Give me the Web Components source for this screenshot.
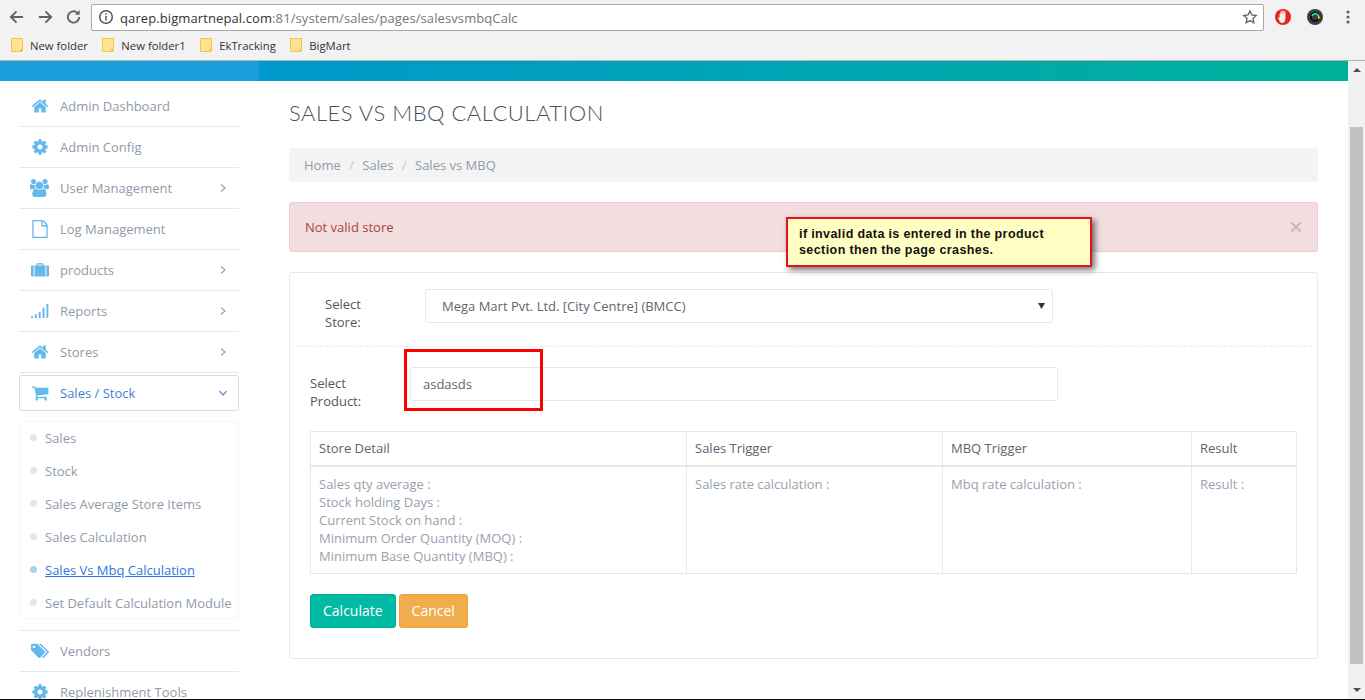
<!DOCTYPE html>
<html lang="en"><head><meta charset="utf-8"><title>Sales vs MBQ Calculation</title>
<style>
html,body{margin:0;padding:0;background:#fff;overflow:hidden;height:700px}
body{font:13px "Open Sans",sans-serif;color:#8f9ba9}
</style></head><body>
<app-shell>
  <browser-bar slot="top" url-host="qarep.bigmartnepal.com" url-rest=":81/system/sales/pages/salesvsmbqCalc">
    <book-mark>New folder</book-mark><book-mark>New folder1</book-mark><book-mark>EkTracking</book-mark><book-mark>BigMart</book-mark>
  </browser-bar>
  <side-nav slot="side">
    <nav-item icon="home">Admin Dashboard</nav-item>
    <nav-item icon="cog">Admin Config</nav-item>
    <nav-item icon="users" caret="right">User Management</nav-item>
    <nav-item icon="file">Log Management</nav-item>
    <nav-item icon="suitcase" caret="right">products</nav-item>
    <nav-item icon="signal" caret="right">Reports</nav-item>
    <nav-item icon="home" caret="right">Stores</nav-item>
    <nav-item icon="cart" caret="down" active>Sales / Stock</nav-item>
    <sub-nav>
      <sub-item>Sales</sub-item>
      <sub-item>Stock</sub-item>
      <sub-item>Sales Average Store Items</sub-item>
      <sub-item>Sales Calculation</sub-item>
      <sub-item current>Sales Vs Mbq Calculation</sub-item>
      <sub-item>Set Default Calculation Module</sub-item>
    </sub-nav>
    <nav-item icon="tags">Vendors</nav-item>
    <nav-item icon="cog">Replenishment Tools</nav-item>
  </side-nav>
  <calc-page slot="main"></calc-page>
</app-shell>
<script>
const FA={
 home:['0 0 1792 1792','M1472 992v480q0 26-19 45t-45 19h-384v-384h-256v384h-384q-26 0-45-19t-19-45v-480q0-1 .5-3t.5-3l575-474 575 474q1 2 1 6zm223-69l-62 74q-8 9-21 11h-3q-13 0-21-7l-692-577-692 577q-12 8-24 7-13-2-21-11l-62-74q-8-10-7-23.5t11-21.5l719-599q32-26 76-26t76 26l244 204v-195q0-14 9-23t23-9h192q14 0 23 9t9 23v408l219 182q10 8 11 21.5t-7 23.5z'],
 cog:['0 0 1792 1792','M1152 896q0-106-75-181t-181-75-181 75-75 181 75 181 181 75 181-75 75-181zm512-109v222q0 12-8 23t-20 13l-185 28q-19 54-39 91 35 50 107 138 10 12 10 25t-9 23q-27 37-99 108t-94 71q-12 0-26-9l-138-108q-44 23-91 38-16 136-29 186-7 28-36 28h-222q-14 0-24.5-8.5t-11.5-21.5l-28-184q-49-16-90-37l-141 107q-10 9-25 9-14 0-25-11-126-114-165-168-7-10-7-23 0-12 8-23 15-21 51-66.5t54-70.5q-27-50-41-99l-183-27q-13-2-21-12.5t-8-23.5v-222q0-12 8-23t19-13l186-28q14-46 39-92-40-57-107-138-10-12-10-24 0-10 9-23 26-36 98.500-107.500t94.500-71.500q13 0 26 10l138 107q44-23 91-38 16-136 29-186 7-28 36-28h222q14 0 24.500 8.500t11.500 21.500l28 184q49 16 90 37l142-107q9-9 24-9 13 0 25 10 129 119 165 170 7 8 7 22 0 12-8 23-15 21-51 66.500t-54 70.500q26 50 41 98l183 28q13 2 21 12.500t8 23.500z'],
 users:['0 0 1920 1792','M529 896q-162 5-265 128h-134q-82 0-138-40.500t-56-118.500q0-353 124-353 6 0 43.500 21t97.500 42.500 119 21.500q67 0 133-23-5 37-5 66 0 139 81 256zm1071 637q0 120-73 189.500t-194 69.500h-874q-121 0-194-69.500t-73-189.500q0-53 3.500-103.500t14-109 26.500-108.500 43-97.500 62-81 85.500-53.500 111.500-20q10 0 43 21.500t73 48 107 48 135 21.500 135-21.500 107-48 73-48 43-21.500q61 0 111.500 20t85.500 53.500 62 81 43 97.500 26.500 108.500 14 109 3.500 103.500zm-1024-1277q0 106-75 181t-181 75-181-75-75-181 75-181 181-75 181 75 75 181zm704 384q0 159-112.500 271.500t-271.500 112.500-271.500-112.500-112.500-271.500 112.500-271.500 271.500-112.500 271.500 112.500 112.500 271.500zm576 225q0 78-56 118.500t-138 40.500h-134q-103-123-265-128 81-117 81-256 0-29-5-66 66 23 133 23 59 0 119-21.500t97.500-42.500 43.500-21q124 0 124 353zm-128-609q0 106-75 181t-181 75-181-75-75-181 75-181 181-75 181 75 75 181z'],
 cart:['0 0 1792 1792','M704 1536q0 52-38 90t-90 38-90-38-38-90 38-90 90-38 90 38 38 90zm896 0q0 52-38 90t-90 38-90-38-38-90 38-90 90-38 90 38 38 90zm128-1088v512q0 24-16.500 42.500t-40.500 21.500l-1044 122q13 60 13 70 0 16-24 64h920q26 0 45 19t19 45-19 45-45 19h-1024q-26 0-45-19t-19-45q0-11 8-31.500t16-36 21.500-40 15.500-29.500l-177-823h-204q-26 0-45-19t-19-45 19-45 45-19h256q16 0 28.500 6.500t19.500 15.500 13 24.500 8 26 5.500 29.500 4.500 26h1201q26 0 45 19t19 45z'],
 tags:['0 0 1920 1792','M448 448q0-53-37.500-90.500t-90.500-37.500-90.500 37.500-37.500 90.500 37.500 90.500 90.500 37.500 90.500-37.500 37.500-90.500zm1067 576q0 53-37 90l-491 492q-39 37-91 37-53 0-90-37l-715-716q-38-37-64.500-101t-26.500-117v-416q0-52 38-90t90-38h416q53 0 117 26.500t102 64.500l715 714q37 39 37 91zm384 0q0 53-37 90l-491 492q-39 37-91 37-36 0-59-14t-53-45l470-470q37-37 37-90 0-52-37-91l-715-714q-38-38-102-64.500t-117-26.500h224q53 0 117 26.500t102 64.500l715 714q37 39 37 91z'],
 file:['0 0 1536 1792','M1468 380l-312-312q-28-28-76-48t-88-20h-896q-40 0-68 28t-28 68v1600q0 40 28 68t68 28h1344q40 0 68-28t28-68v-1152q0-40-20-88t-48-76zm-444-244q14 5 23 14l313 313q9 9 14 23h-350zm384 1528h-1280v-1536h768v416q0 40 28 68t68 28h416z'],
 suitcase:['0 0 1792 1792','M0 560q0-112 112-112h144v1088h-144q-112 0-112-112zM352 448h192v-144q0-80 80-80h544q80 0 80 80v144h192v1088h-1088zm320 0h448v-96h-448zM1536 448h144q112 0 112 112v864q0 112-112 112h-144z'],
 signal:['0 0 1792 1792','M0 1408h192v192h-192zM384 1216h192v384h-192zM768 960h192v640h-192zM1152 576h192v1024h-192zM1536 192h192v1408h-192z']
};
function def(name,html){customElements.define(name,class extends HTMLElement{
  connectedCallback(){ if(this.shadowRoot) return; const s=this.attachShadow({mode:'open'}); s.innerHTML=typeof html==='function'?html(this):html; }
});}
def('app-shell',`<style>
:host{display:block;width:1365px;height:700px;position:relative;overflow:hidden;background:#fff}
.frame{display:flex;flex-direction:column;height:699px;overflow:hidden}
.row{display:flex;flex:1;min-height:0;overflow:hidden}
.content{display:grid;grid-template-columns:289px 1029px;flex:1;min-width:0;align-items:start}
.bar{height:20px;flex:none;display:flex}
.grad{flex:1;background:linear-gradient(90deg,#0099cc,#00b19a)}
.lead{width:259px;background:#1a9fda}
.scroll{width:17px;flex:none;background:#f1f1f1;display:flex;flex-direction:column;align-items:center}
.up{width:0;height:0;border:4px solid transparent;border-top:0;border-bottom:4px solid #505050;margin-top:7px}
.thumb{width:13px;margin-top:55px;height:537px;background:#c1c1c1}
.down{width:0;height:0;border:4px solid transparent;border-bottom:0;border-top:4px solid #505050;margin-top:24px}
.edge{height:1px;background:#111}
.main{display:flex;flex:1;min-width:0;flex-direction:column}
</style><div class="frame"><slot name="top"></slot>
<div class="row"><div class="main"><div class="bar"><div class="lead"></div><div class="grad"></div></div>
<div class="content"><slot name="side"></slot><slot name="main"></slot></div></div>
<div class="scroll"><div class="up"></div><div class="thumb"></div><div class="down"></div></div></div></div><div class="edge"></div>`);
def('browser-bar',h=>`<style>
:host{display:block;background:#f2f2f2;border-bottom:1px solid #b3b3b3;height:60px;font-family:"Open Sans",sans-serif;color:#333;flex:none}
.tb{display:flex;align-items:center;height:34px;padding-left:8px}
.nav{display:flex;gap:12px;margin-right:9px;width:74px}
.nav svg{width:18px;height:18px;fill:none;stroke:#5f6368;stroke-width:2}
.box{width:1173px;height:27px;box-sizing:border-box;border:1px solid #a9a9a9;border-radius:2px;background:#fff;display:flex;align-items:center;padding-left:6px;font-size:13px;letter-spacing:.1px}
.box .u{flex:1;margin-left:6px;padding-top:1px}.box b{font-weight:400;color:#333}.box span{color:#767676}
.ext{display:flex;align-items:center}
.bm{display:flex;height:26px;align-items:center;padding-left:11px;margin-top:-2px}
</style>
<div class="tb"><div class="nav">
<svg viewBox="0 0 18 18"><path d="M16 9H3M9 3L3 9l6 6"/></svg>
<svg viewBox="0 0 18 18"><path d="M2 9h13M9 3l6 6-6 6"/></svg>
<svg viewBox="0 0 18 18" style="margin-left:-1px"><path d="M15 9a6 6 0 1 1-1.800-4.300"/><path d="M15.500 1.500v5h-5" fill="#5f6368" stroke="none"/></svg></div>
<div class="box"><svg width="16" height="16" viewBox="0 0 16 16" fill="none" stroke="#555" stroke-width="1.500"><circle cx="8" cy="8" r="6.300"/><path d="M8 7v4.500M8 4.300v1.500"/></svg>
<div class="u"><b>${h.getAttribute('url-host')}</b><span>${h.getAttribute('url-rest')}</span></div>
<svg width="16" height="16" viewBox="0 0 24 24" fill="none" stroke="#5f6368" stroke-width="2" style="margin-right:5px"><path d="M12 3l2.800 6 6.500.8-4.800 4.400 1.300 6.500L12 17.400l-5.800 3.300 1.300-6.500-4.800-4.400 6.500-.8z"/></svg></div>
<div class="ext">
<svg width="18" height="18" viewBox="0 0 18 18" style="margin-left:10px"><circle cx="9" cy="9" r="8" fill="#e4261b"/><path d="M5.500 6h1V3.200h1.300v2.300h.5V2.600h1.300v3h.5V3.300h1.300V10c0 3.300-1.200 5-3.200 5-1.700 0-2.400-1-3-2.500L4 9.800l1-.4 .8 1.200h-.3z" fill="#f6eeee"/></svg>
<svg width="18" height="18" viewBox="0 0 18 18" style="margin-left:14px"><circle cx="9" cy="9" r="8" fill="#3a3f45"/><circle cx="9" cy="9" r="4" fill="none" stroke="#111" stroke-width="2"/><path d="M6 8a3.500 3.500 0 0 1 6-1" fill="none" stroke="#0fd" stroke-width="1.500"/><path d="M12 7a3.500 3.500 0 0 1 .5 4" fill="none" stroke="#ee0" stroke-width="1.500"/></svg>
<svg width="4" height="14" viewBox="0 0 4 14" style="margin-left:22px"><g fill="#5f6368"><circle cx="2" cy="2" r="1.600"/><circle cx="2" cy="7" r="1.600"/><circle cx="2" cy="12" r="1.600"/></g></svg></div></div>
<div class="bm"><slot></slot></div>`);
def('book-mark',`<style>:host{display:inline-flex;align-items:center;font-size:11.300px;color:#333;margin-right:14.500px;font-family:"Open Sans",sans-serif}
svg{margin-right:7px}</style>
<svg width="12" height="14" viewBox="0 0 12 14"><path d="M.5.5h11v11.500l-1 1.500H.5z" fill="#ffe38f" stroke="#f0c648"/><rect x="9" y="11" width="2.500" height="2.500" fill="#f0c648"/></svg><slot></slot>`);
def('side-nav',`<style>:host{display:flex;flex-direction:column;padding:5px 0 0 19px;width:220px;box-sizing:content-box}</style><slot></slot>`);
def('nav-icon',h=>{const f=FA[h.getAttribute('name')];return `<style>:host{display:inline-flex;width:22px;height:18px;align-items:center;justify-content:center}svg{width:${h.getAttribute('name')=='suitcase'||h.getAttribute('name')=='users'?20:18}px;height:18px;fill:#63b9ec}</style><svg viewBox="${f[0]}" preserveAspectRatio="xMidYMid meet"><path d="${f[1]}"/></svg>`});
def('nav-item',h=>{const c=h.getAttribute('caret'),a=h.hasAttribute('active');return `<style>
:host{display:flex;align-items:center;height:40px;padding-left:10px;padding-right:11px;border-bottom:1px solid #e4e9f1;color:#8f9ba9;font-size:13px;box-sizing:content-box;flex:none}
:host([active]){height:34px;border:1px solid #d7dce4;border-radius:3px;margin-top:2px;margin-bottom:10px;color:#3f7fd4;padding-left:9px;padding-right:10px}
.t{flex:1;margin-left:9px;margin-top:${a?'0':'-1px'}}
nav-icon{margin-top:${a?'0':'-1px'}}
svg.c{width:10px;height:10px;fill:none;stroke:${a?'#5b8fd6':'#97a2ae'};stroke-width:1.200;margin-right:0}
</style><nav-icon name="${h.getAttribute('icon')}"></nav-icon><span class="t"><slot></slot></span>${c=='right'?'<svg class="c" viewBox="0 0 10 10"><path d="M3 1.500L7 5 3 8.500"/></svg>':c=='down'?'<svg class="c" viewBox="0 0 10 10"><path d="M1.500 3L5 7l3.500-4"/></svg>':''}`});
def('sub-nav',`<style>:host{display:block;height:210px;border-bottom:1px solid #e4e9f1;box-sizing:border-box}
.box{height:198px;box-sizing:border-box;border:1px solid #f6f7fa;border-radius:3px}</style><div class="box"><slot></slot></div>`);
def('sub-item',h=>{const c=h.hasAttribute('current');return `<style>
:host{display:flex;align-items:center;height:31px;padding:0 0 2px 10px;font-size:13px;color:#8f9ba9;white-space:nowrap}
i{width:7px;height:7px;border-radius:50%;background:${c?'#a9d3f5':'#e3e6ea'};margin-right:8px;flex:none;margin-top:-1px}
span{${c?'color:#2a78e4;text-decoration:underline':''}}
</style><i></i><span><slot></slot></span>`});
def('crumb-bar',`<style>:host{display:block;height:34px;line-height:34px;background:#f4f4f4;border-radius:3px;padding-left:15px;font-size:13px;color:#8f9ba9}
i{font-style:normal;color:#c9c9c9;margin:0 8.400px}</style>Home<i>/</i>Sales<i>/</i>Sales vs MBQ`);
def('alert-box',`<style>:host{display:flex;align-items:center;justify-content:space-between;height:50px;box-sizing:border-box;background:#f2dede;border:1px solid #ebccd1;border-radius:3px;padding:0 15px;color:#a94442;font-size:13px}
svg{stroke:#c4b4b6;stroke-width:1.800;fill:none}</style><span><slot></slot></span><svg width="12" height="12" viewBox="0 0 12 12"><path d="M1.500 1.500l9 9M10.500 1.500l-9 9"/></svg>`);
def('form-row',h=>`<style>:host{display:flex;align-items:flex-start;height:34px;color:#4f5863;line-height:18px;font-size:13px}
.l{box-sizing:border-box}.f{height:34px;box-sizing:border-box;border:1px solid #e3e8f0;border-radius:3px;display:flex;align-items:center;justify-content:space-between;color:#5c6672}
</style><div class="l" style="padding-left:${h.getAttribute('lx')}px;padding-top:${h.getAttribute('lt')}px;width:${h.getAttribute('lw')}px"><slot name="label"></slot></div>
<div class="f" style="width:${h.getAttribute('fw')}px;padding:0 ${h.hasAttribute('sel')?7:12}px 0 ${h.hasAttribute('sel')?16:12}px"><slot></slot>${h.hasAttribute('sel')?'<svg width="7" height="6" viewBox="0 0 7 6"><path d="M0 0h7L3.500 6z" fill="#333"/></svg>':''}</div>`);
def('data-table',`<style>:host{display:grid;grid-template-columns:376px 256px 249px 106px;width:987px;border:1px solid #e3e8f0;border-width:1px 1px 1px 0;box-sizing:border-box;font-size:13px;line-height:18px}
div{box-sizing:border-box;padding-left:8px;border-left:1px solid #e3e8f0}
.h{height:35px;display:flex;align-items:center;padding-bottom:2px;color:#5b6470;border-bottom:2px solid #e3e8f0}
.b{height:106px;padding-top:8px;color:#98a2ae}
</style><div class="h">Store Detail</div><div class="h">Sales Trigger</div><div class="h">MBQ Trigger</div><div class="h">Result</div>
<div class="b">Sales qty average :<br>Stock holding Days :<br>Current Stock on hand :<br>Minimum Order Quantity (MOQ) :<br>Minimum Base Quantity (MBQ) :</div><div class="b">Sales rate calculation :</div><div class="b">Mbq rate calculation :</div><div class="b">Result :</div>`);
def('ui-button',h=>`<style>:host{display:inline-flex;align-items:center;justify-content:center;height:34px;padding:0 12px 2px;box-sizing:border-box;border-radius:3px;color:#fff;font-size:14px;background:${h.getAttribute('bg')};border:1px solid ${h.getAttribute('bd')}}</style><slot></slot>`);
def('calc-page',`<style>
:host{display:block;position:relative;width:1029px;font-family:"Open Sans",sans-serif}
h1{margin:0;font:300 22px/26px Lato,sans-serif;letter-spacing:.5px;color:#48525e;padding-top:19px;height:48px;box-sizing:content-box}
alert-box{margin-top:20px}
.panel{margin-top:20px;height:387px;box-sizing:border-box;border:1px solid #e3e8f0;border-radius:3px;padding:16px 5px 0;}
.dash{border-top:1px dashed #e6eaf0;margin:24px 0 20px}
form-row.r1{height:33px}
.p2{padding:0 15px}
data-table{margin-top:30px}
.btns{display:flex;gap:3px;margin-top:20px}
.red{position:absolute;left:115px;top:268px;width:139px;height:62px;box-sizing:border-box;border:3px solid #f00}
.note{position:absolute;left:497px;top:136px;width:306px;height:50px;box-sizing:border-box;border:2px solid #e8101c;background:#ffffc4;box-shadow:3px 3px 6px rgba(0,0,0,.55);padding:7px 0 0 11px;font:bold 12.500px/16px "Liberation Sans",sans-serif;letter-spacing:.42px;word-spacing:-.2px;color:#111}
</style>
<h1>SALES VS MBQ CALCULATION</h1>
<crumb-bar></crumb-bar>
<alert-box>Not valid store</alert-box>
<div class="panel">
 <form-row class="r1" lx="30" lt="6" lw="130" fw="628" sel><span slot="label">Select<br>Store:</span>Mega Mart Pvt. Ltd. [City Centre] (BMCC)</form-row>
 <div class="dash"></div>
 <div class="p2"><form-row lx="0" lt="7" lw="100" fw="648"><span slot="label">Select<br>Product:</span>asdasds</form-row>
 <data-table></data-table>
 <div class="btns"><ui-button bg="#00bba4" bd="#00ab96">Calculate</ui-button><ui-button bg="#f0ad4e" bd="#eea236">Cancel</ui-button></div></div>
</div>
<div class="red"></div>
<div class="note">if invalid data is entered in the product section then the page crashes.</div>`);
</script>
</body></html>
